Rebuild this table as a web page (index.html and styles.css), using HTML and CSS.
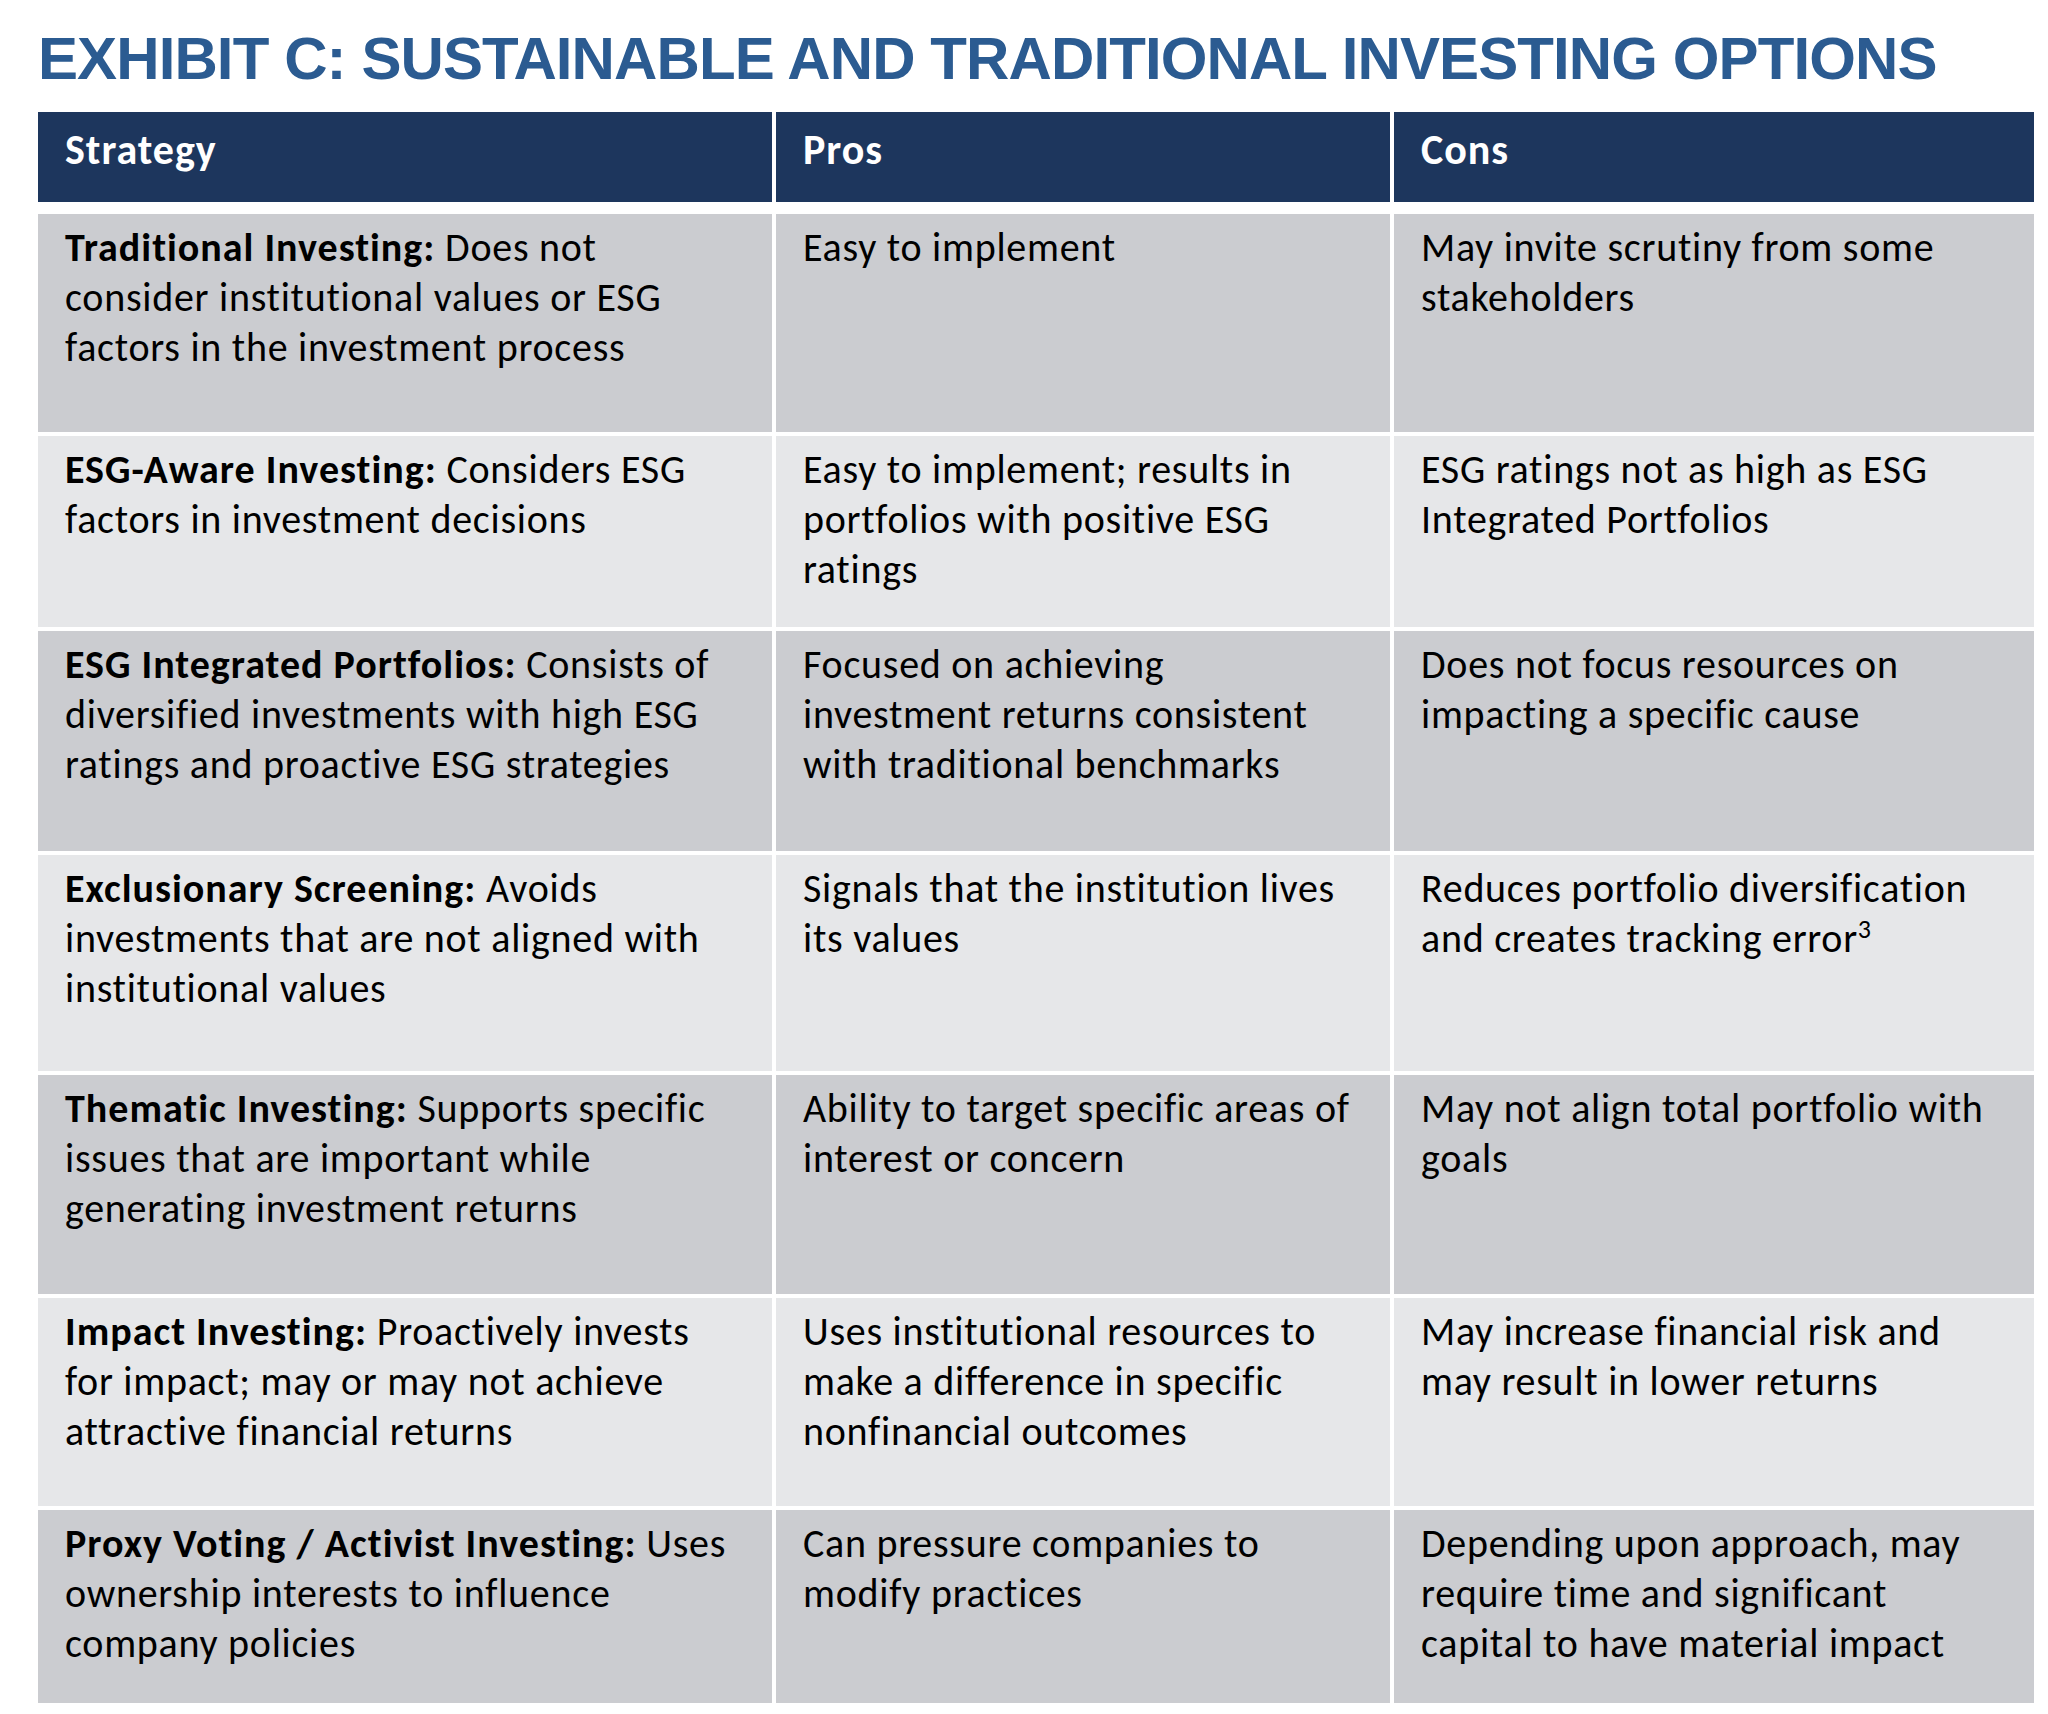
FILE: index.html
```html
<!DOCTYPE html>
<html lang="en">
<head>
<meta charset="utf-8">
<title>Exhibit C: Sustainable and Traditional Investing Options</title>
<link rel="stylesheet" href="styles.css">
</head>
<body>
<main class="page">
  <h1 class="title">EXHIBIT C: SUSTAINABLE AND TRADITIONAL INVESTING OPTIONS</h1>
  <div class="table-head">
    <div class="cell head">Strategy</div>
    <div class="cell head">Pros</div>
    <div class="cell head">Cons</div>
  </div>
  <div class="table-body">
    <div class="cell dark"><b>Traditional Investing:</b> Does not<br>consider institutional values or ESG<br>factors in the investment process</div>
    <div class="cell dark">Easy to implement</div>
    <div class="cell dark">May invite scrutiny from some<br>stakeholders</div>

    <div class="cell light"><b>ESG-Aware Investing:</b> Considers ESG<br>factors in investment decisions</div>
    <div class="cell light">Easy to implement; results in<br>portfolios with positive ESG<br>ratings</div>
    <div class="cell light">ESG ratings not as high as ESG<br>Integrated Portfolios</div>

    <div class="cell dark"><b>ESG Integrated Portfolios:</b> Consists of<br>diversified investments with high ESG<br>ratings and proactive ESG strategies</div>
    <div class="cell dark">Focused on achieving<br>investment returns consistent<br>with traditional benchmarks</div>
    <div class="cell dark">Does not focus resources on<br>impacting a specific cause</div>

    <div class="cell light"><b>Exclusionary Screening:</b> Avoids<br>investments that are not aligned with<br>institutional values</div>
    <div class="cell light">Signals that the institution lives<br>its values</div>
    <div class="cell light">Reduces portfolio diversification<br>and creates tracking error<sup>3</sup></div>

    <div class="cell dark"><b>Thematic Investing:</b> Supports specific<br>issues that are important while<br>generating investment returns</div>
    <div class="cell dark">Ability to target specific areas of<br>interest or concern</div>
    <div class="cell dark">May not align total portfolio with<br>goals</div>

    <div class="cell light"><b>Impact Investing:</b> Proactively invests<br>for impact; may or may not achieve<br>attractive financial returns</div>
    <div class="cell light">Uses institutional resources to<br>make a difference in specific<br>nonfinancial outcomes</div>
    <div class="cell light">May increase financial risk and<br>may result in lower returns</div>

    <div class="cell dark"><b>Proxy Voting / Activist Investing:</b> Uses<br>ownership interests to influence<br>company policies</div>
    <div class="cell dark">Can pressure companies to<br>modify practices</div>
    <div class="cell dark">Depending upon approach, may<br>require time and significant<br>capital to have material impact</div>
  </div>
</main>
</body>
</html>
```

FILE: styles.css
```css
html, body {
  margin: 0;
  padding: 0;
  background: #ffffff;
}

.page {
  padding: 29px 0 0 38px;
}

.title {
  margin: 0 0 23px 0;
  font-family: "Liberation Sans", Arial, sans-serif;
  font-weight: 700;
  font-size: 60px;
  line-height: 60px;
  letter-spacing: -0.9px;
  color: #2b5b91;
  white-space: nowrap;
}

.table-head,
.table-body {
  display: grid;
  width: 1996px;
  grid-template-columns: 734px 614px 640px;
  column-gap: 4px;
  font-family: "Carlito", "Lato", sans-serif;
  font-size: 40px;
  line-height: 50px;
  letter-spacing: 0.73px;
  color: #000000;
}

.table-head {
  grid-template-rows: 90px;
  margin-bottom: 12px;
}

.table-body {
  grid-template-rows: 218px 191px 220px 216px 219px 208px 193px;
  row-gap: 4px;
}

.cell {
  padding: 9px 20px 0 27px;
  white-space: nowrap;
}

.head {
  background: #1d365d;
  color: #ffffff;
  font-weight: 700;
  font-size: 42px;
  letter-spacing: 1px;
  padding-top: 13px;
}

.dark {
  background: #cbccd0;
}

.light {
  background: #e6e7e9;
}

.cell b {
  font-weight: 700;
  letter-spacing: 1px;
}

.cell sup {
  font-size: 26px;
  line-height: 0;
  vertical-align: 14px;
}
```
